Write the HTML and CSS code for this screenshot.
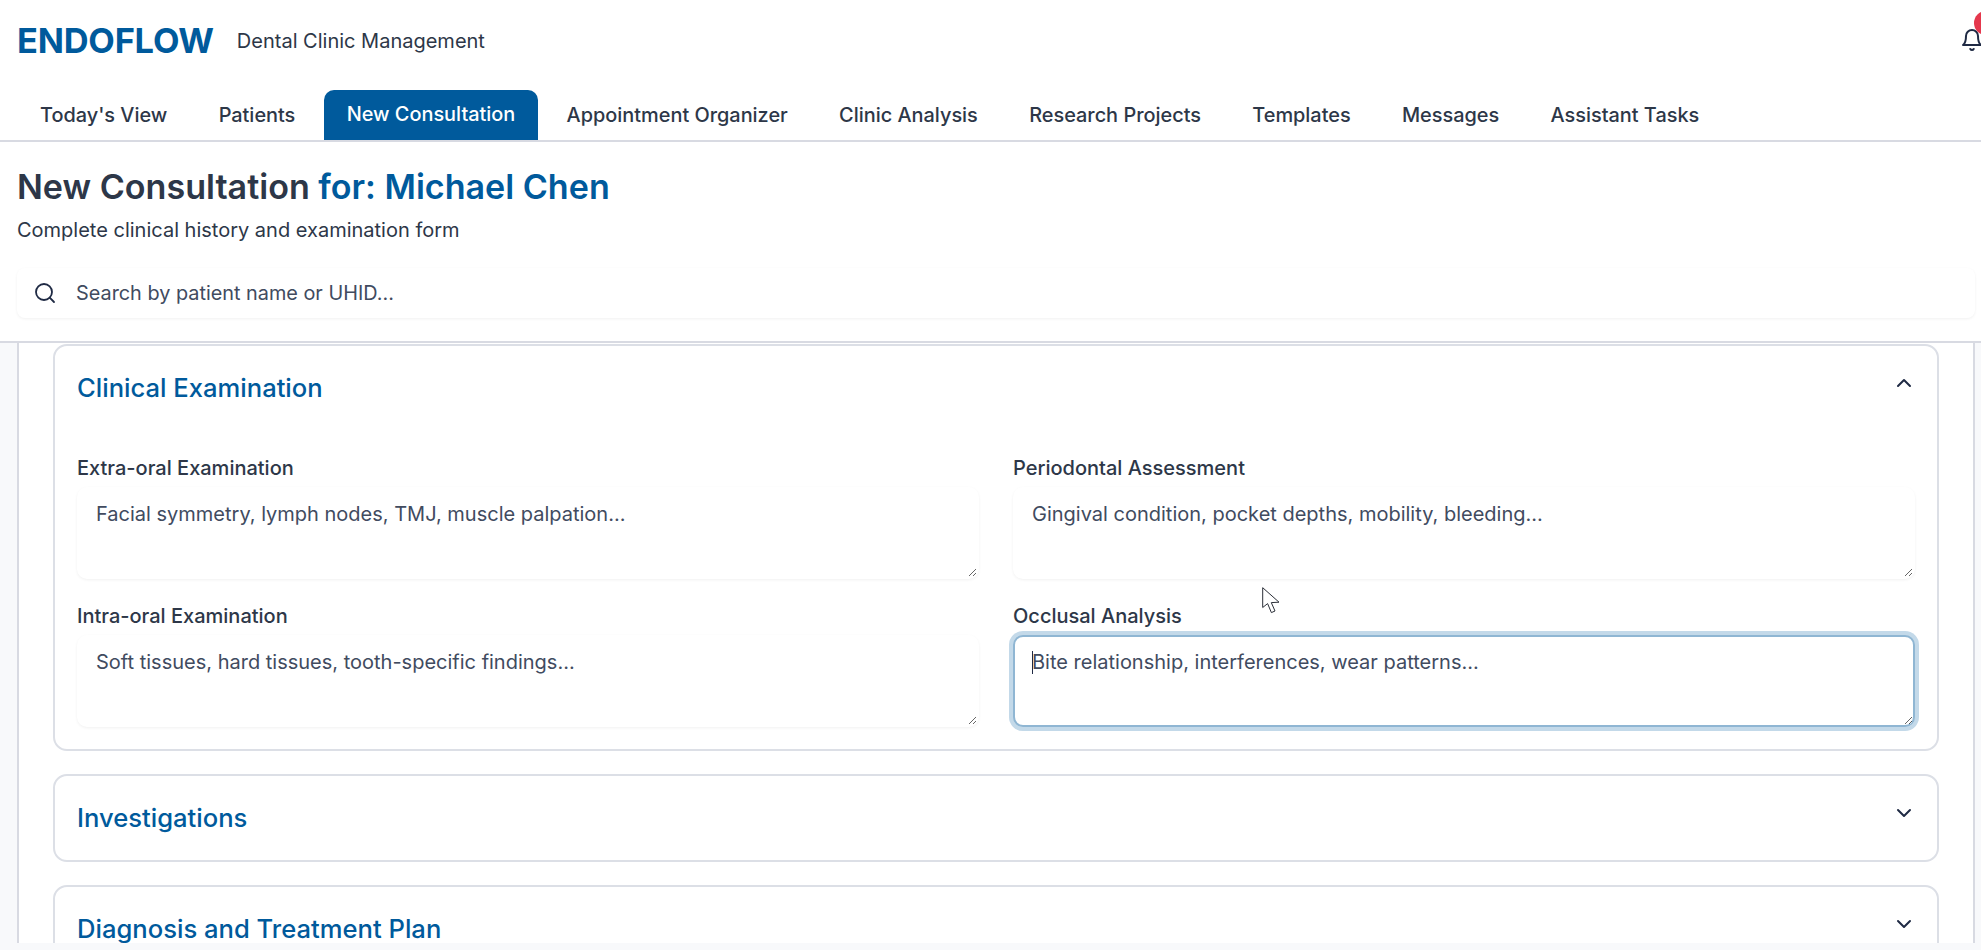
FILE: index.html
```html
<!DOCTYPE html>
<html lang="en">
<head>
  <meta charset="UTF-8">
  <title>ENDOFLOW - New Consultation</title>
  <link rel="stylesheet" href="styles.css">
</head>
<body>
  <header class="site-header">
    <div class="topbar">
      <div class="brand">
        <span class="logo">ENDOFLOW</span>
        <span class="tagline">Dental Clinic Management</span>
      </div>
      <div class="bell">
        <svg viewBox="0 0 24 24" width="24" height="24" fill="none" stroke="#1f2a44" stroke-width="2" stroke-linecap="round" stroke-linejoin="round">
          <path d="M6 8a6 6 0 0 1 12 0c0 7 3 9 3 9H3s3-2 3-9"/>
          <path d="M10.3 21a1.94 1.94 0 0 0 3.4 0"/>
        </svg>
        <span class="bell-dot"></span>
      </div>
    </div>

    <nav class="tabs">
      <a class="tab">Today's View</a>
      <a class="tab">Patients</a>
      <a class="tab active">New Consultation</a>
      <a class="tab">Appointment Organizer</a>
      <a class="tab">Clinic Analysis</a>
      <a class="tab">Research Projects</a>
      <a class="tab">Templates</a>
      <a class="tab">Messages</a>
      <a class="tab">Assistant Tasks</a>
    </nav>

    <div class="page-head">
      <h1>New Consultation <span class="patient">for: Michael Chen</span></h1>
      <p class="subtitle">Complete clinical history and examination form</p>
      <div class="search">
        <svg viewBox="0 0 24 24" width="24" height="24" fill="none" stroke="#1f2a44" stroke-width="1.8" stroke-linecap="round" stroke-linejoin="round">
          <circle cx="11" cy="11" r="8"/>
          <path d="m21 21-4.3-4.3"/>
        </svg>
        <input type="text" placeholder="Search by patient name or UHID...">
      </div>
    </div>
  </header>

  <main class="main">
    <div class="content">
      <section class="card">
        <div class="card-head">
          <h2>Clinical Examination</h2>
          <svg class="chevron" viewBox="0 0 24 24" width="24" height="24" fill="none" stroke="#1f2a44" stroke-width="2" stroke-linecap="round" stroke-linejoin="round"><path d="m18 15-6-6-6 6"/></svg>
        </div>
        <div class="form-grid">
          <div class="field">
            <label>Extra-oral Examination</label>
            <div class="input-box"><textarea placeholder="Facial symmetry, lymph nodes, TMJ, muscle palpation..."></textarea></div>
          </div>
          <div class="field">
            <label>Periodontal Assessment</label>
            <div class="input-box"><textarea placeholder="Gingival condition, pocket depths, mobility, bleeding..."></textarea></div>
          </div>
          <div class="field">
            <label>Intra-oral Examination</label>
            <div class="input-box"><textarea placeholder="Soft tissues, hard tissues, tooth-specific findings..."></textarea></div>
          </div>
          <div class="field">
            <label>Occlusal Analysis</label>
            <div class="input-box">
              <textarea class="focused" placeholder="Bite relationship, interferences, wear patterns..."></textarea>
              <span class="caret"></span>
            </div>
          </div>
        </div>
      </section>

      <section class="card">
        <div class="card-head">
          <h2>Investigations</h2>
          <svg class="chevron" viewBox="0 0 24 24" width="24" height="24" fill="none" stroke="#1f2a44" stroke-width="2" stroke-linecap="round" stroke-linejoin="round"><path d="m6 9 6 6 6-6"/></svg>
        </div>
      </section>

      <section class="card">
        <div class="card-head">
          <h2>Diagnosis and Treatment Plan</h2>
          <svg class="chevron" viewBox="0 0 24 24" width="24" height="24" fill="none" stroke="#1f2a44" stroke-width="2" stroke-linecap="round" stroke-linejoin="round"><path d="m6 9 6 6 6-6"/></svg>
        </div>
      </section>
    </div>
  </main>

  <svg class="pointer" viewBox="0 0 18 27" width="18" height="27" fill="#fff" stroke="#2b2f38" stroke-width="1" stroke-linejoin="round">
    <path d="M0.7 0.7 V20.5 L5.6 16.6 L9.4 25.6 L13 24 L9.3 15.6 L17 15.2 Z"/>
  </svg>
</body>
</html>
```

FILE: styles.css
```css
* {
  box-sizing: border-box;
}

html, body {
  height: 100%;
}

body {
  margin: 0;
  height: 100vh;
  display: flex;
  flex-direction: column;
  overflow: hidden;
  font-family: 'Inter', 'Liberation Sans', sans-serif;
  font-size: 20px;
  color: #2d3748;
  background: #f8f9fb;
}

.site-header {
  flex: none;
  background: #fff;
  border-bottom: 2px solid #d8dae2;
  height: 343px;
}

.topbar {
  height: 90px;
  padding: 0 0 10px 17px;
  display: flex;
  align-items: center;
  justify-content: space-between;
}

.brand {
  display: flex;
  align-items: center;
  gap: 23px;
}

.logo {
  font-size: 34.4px;
  font-weight: 700;
  color: #005a9c;
  letter-spacing: -0.2px;
}

.tagline {
  margin-top: 1px;
  font-size: 20px;
  color: #2d3748;
}

.bell {
  position: relative;
  width: 24px;
  height: 24px;
  margin: 0 -3px 0 0;
}

.bell svg {
  display: block;
}

.bell-dot {
  position: absolute;
  top: -17px;
  left: 14px;
  width: 24px;
  height: 24px;
  border-radius: 50%;
  background: #e5384d;
}

.tabs {
  display: flex;
  gap: 5.3px;
  height: 52px;
  padding: 0 0 0 17px;
  border-bottom: 2px solid #d8dae2;
}

.tab {
  padding: 0 23px;
  display: flex;
  align-items: center;
  font-size: 19.9px;
  font-weight: 500;
  color: #2d3748;
}

.tab.active {
  background: #005a9c;
  color: #fff;
  border-radius: 10px 10px 0 0;
  padding-bottom: 2px;
}

.page-head {
  padding: 23px 6px 0 17px;
}

h1 {
  margin: 0;
  font-size: 34.1px;
  line-height: 44px;
  font-weight: 600;
  color: #2d3748;
}

.patient {
  color: #005a9c;
}

.subtitle {
  margin: 9px 0 0;
  font-size: 20px;
  line-height: 24px;
}

.search {
  margin-top: 26px;
  height: 50px;
  padding-left: 16px;
  display: flex;
  align-items: center;
  gap: 19px;
  border-radius: 8px;
  background: #fff;
  box-shadow: 0 1px 3px rgba(0, 0, 0, 0.06);
}

.search input {
  flex: 1;
  border: none;
  outline: none;
  padding: 0;
  font: inherit;
  font-size: 19.85px;
  background: transparent;
}

.search input::placeholder {
  color: #414b5f;
  opacity: 1;
}

.main {
  flex: 1;
  min-height: 0;
  padding: 0 6px 7px 17px;
  display: flex;
}

.content {
  flex: 1;
  min-height: 0;
  overflow: hidden;
  padding: 1px 34px 0 34px;
  background: #fff;
  border-left: 2px solid #d8dae2;
  border-right: 2px solid #d8dae2;
}

.card {
  border: 2px solid #dcdfe6;
  border-radius: 14px;
  padding: 22px;
  margin-bottom: 23px;
}

.card-head {
  display: flex;
  justify-content: space-between;
  margin-right: -1px;
}

h2 {
  margin: 0;
  font-size: 25.6px;
  line-height: 40px;
  font-weight: 500;
  color: #005a9c;
}

.chevron {
  margin-top: 3px;
}

.form-grid {
  margin-top: 46px;
  display: grid;
  grid-template-columns: 1fr 1fr;
  column-gap: 34px;
  row-gap: 23px;
}

label {
  display: block;
  margin-bottom: 5px;
  font-size: 20px;
  line-height: 28px;
  font-weight: 500;
}

.input-box {
  position: relative;
}

textarea {
  display: block;
  width: 100%;
  height: 92px;
  padding: 13px 17px;
  border: 2px solid transparent;
  border-radius: 10px;
  outline: none;
  background: #fff;
  box-shadow: 0 1px 3px rgba(0, 0, 0, 0.06);
  font: inherit;
  font-size: 20px;
  line-height: 24px;
  color: #2d3748;
}

textarea::placeholder {
  color: #414b5f;
  opacity: 1;
}

textarea.focused {
  border-color: #8fb6d3;
  box-shadow: 0 0 0 4px #c3d9e9;
}

.caret {
  position: absolute;
  left: 19px;
  top: 16px;
  width: 1px;
  height: 23px;
  background: #1f2a44;
}

.pointer {
  position: absolute;
  left: 1262px;
  top: 587px;
}
```
